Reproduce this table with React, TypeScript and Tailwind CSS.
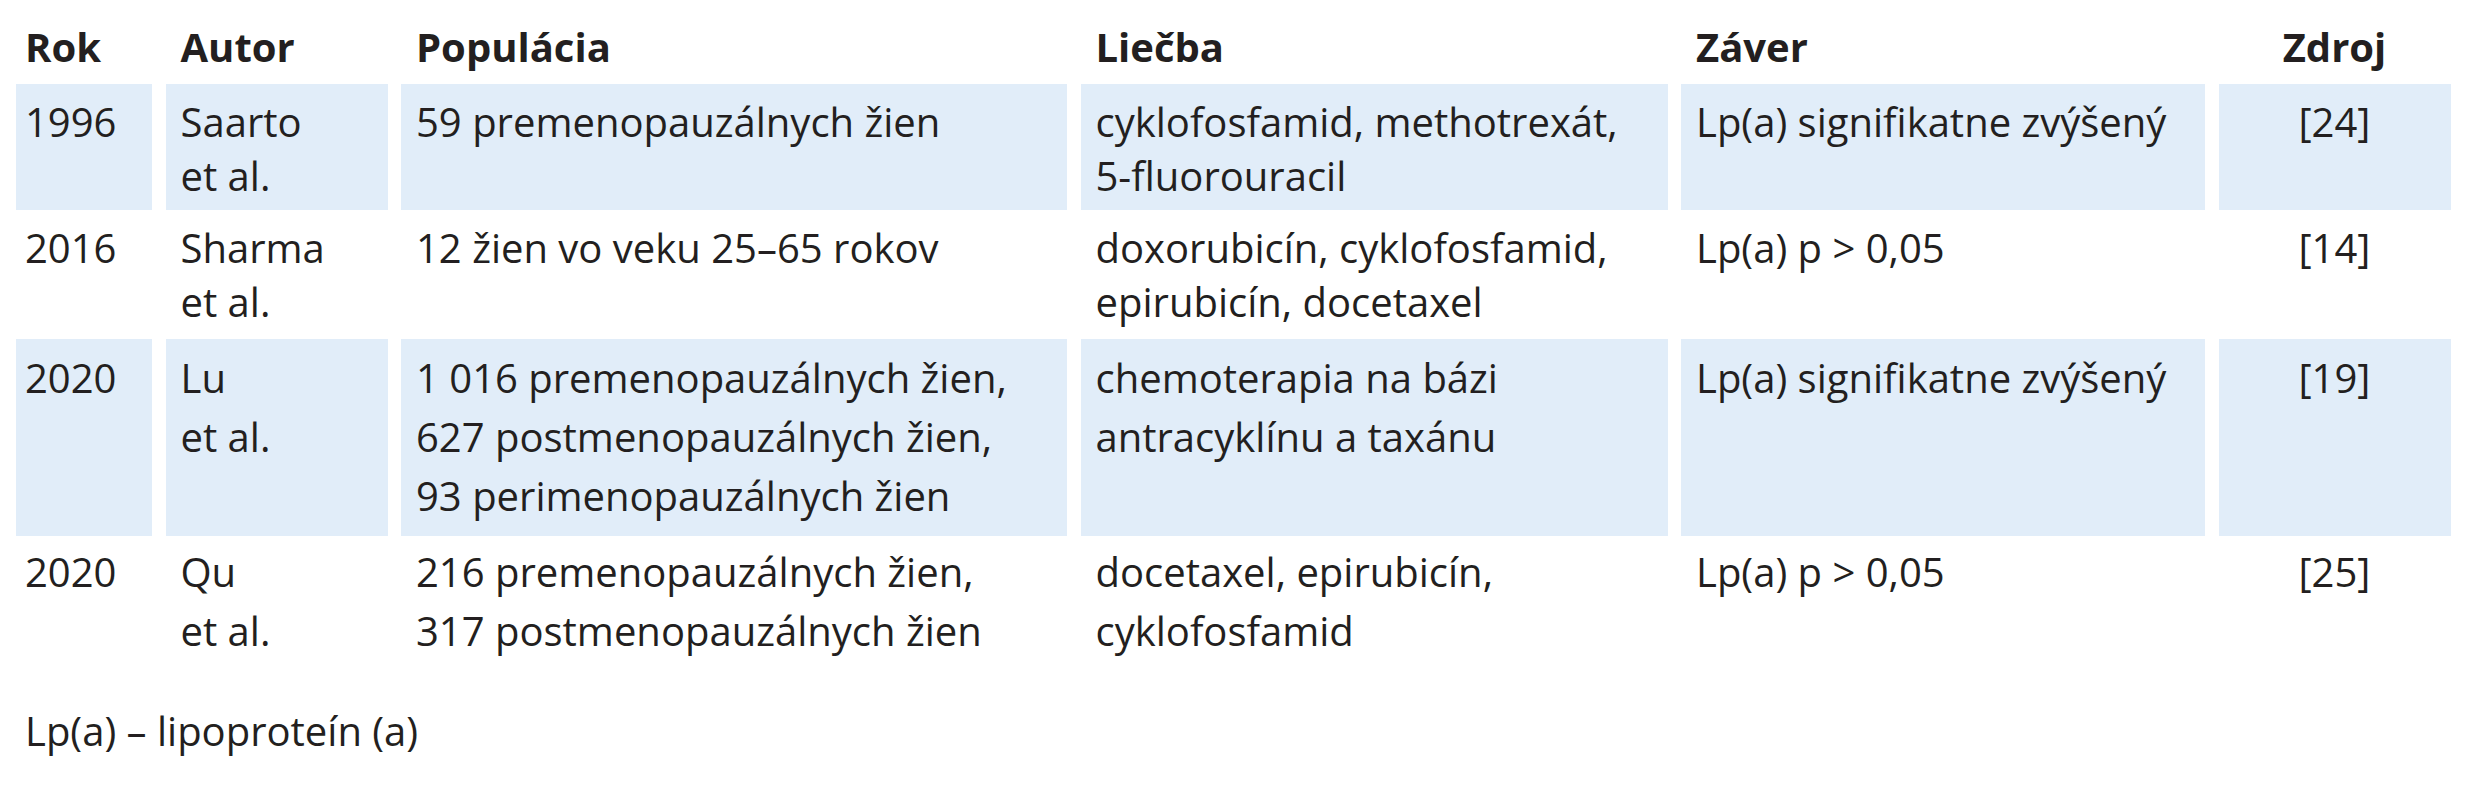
const rows = [
  {
    rok: "1996",
    autor: ["Saarto", "et al."],
    populacia: ["59 premenopauzálnych žien"],
    liecba: ["cyklofosfamid, methotrexát,", "5-fluorouracil"],
    zaver: "Lp(a) signifikatne zvýšený",
    zdroj: "[24]",
    shaded: true,
    box: "h-[126px] leading-[54px]",
    pad: "pt-[11px]",
  },
  {
    rok: "2016",
    autor: ["Sharma", "et al."],
    populacia: ["12 žien vo veku 25–65 rokov"],
    liecba: ["doxorubicín, cyklofosfamid,", "epirubicín, docetaxel"],
    zaver: "Lp(a) p > 0,05",
    zdroj: "[14]",
    shaded: false,
    box: "h-[129px] leading-[54px]",
    pad: "pt-[11px]",
  },
  {
    rok: "2020",
    autor: ["Lu", "et al."],
    populacia: [
      "1\u00a0016 premenopauzálnych žien,",
      "627 postmenopauzálnych žien,",
      "93 perimenopauzálnych žien",
    ],
    liecba: ["chemoterapia na bázi", "antracyklínu a taxánu"],
    zaver: "Lp(a) signifikatne zvýšený",
    zdroj: "[19]",
    shaded: true,
    box: "h-[197px] leading-[59px]",
    pad: "pt-[9px]",
  },
  {
    rok: "2020",
    autor: ["Qu", "et al."],
    populacia: ["216 premenopauzálnych žien,", "317 postmenopauzálnych žien"],
    liecba: ["docetaxel, epirubicín,", "cyklofosfamid"],
    zaver: "Lp(a) p > 0,05",
    zdroj: "[25]",
    shaded: false,
    box: "h-[130px] leading-[59px]",
    pad: "pt-[6px]",
  },
];

function Lines({ lines }: { lines: string[] }) {
  return (
    <>
      {lines.map((line, i) => (
        <div key={i} className="whitespace-nowrap">
          {line}
        </div>
      ))}
    </>
  );
}

export default function App() {
  return (
    <div className="min-h-[800px] w-[2466px] bg-white pl-4 font-['Open_Sans',sans-serif] text-[40px] leading-[59px] text-[#231f20]">
      {/* Header */}
      <div className="grid h-[84px] grid-cols-[136px_222px_666px_587px_524px_232px] gap-x-[13.5px] font-bold">
        <div className="pl-[9px] pt-[17px]">Rok</div>
        <div className="pl-[15px] pt-[17px]">Autor</div>
        <div className="pl-[15px] pt-[17px]">Populácia</div>
        <div className="pl-[15px] pt-[17px]">Liečba</div>
        <div className="pl-[15px] pt-[17px]">Záver</div>
        <div className="pt-[17px] text-center">Zdroj</div>
      </div>

      {/* Body rows */}
      {rows.map((row, i) => {
        const cell = row.shaded ? `bg-[#e1edf9] ${row.pad}` : row.pad;
        return (
          <div
            key={i}
            className={`grid ${row.box} grid-cols-[136px_222px_666px_587px_524px_232px] gap-x-[13.5px]`}
          >
            <div className={`${cell} pl-[9px]`}>{row.rok}</div>
            <div className={`${cell} pl-[15px]`}>
              <Lines lines={row.autor} />
            </div>
            <div className={`${cell} pl-[15px]`}>
              <Lines lines={row.populacia} />
            </div>
            <div className={`${cell} pl-[15px]`}>
              <Lines lines={row.liecba} />
            </div>
            <div className={`${cell} pl-[15px] whitespace-nowrap`}>{row.zaver}</div>
            <div className={`${cell} text-center`}>{row.zdroj}</div>
          </div>
        );
      })}

      {/* Footnote */}
      <p className="mt-[35px] pl-[9px]">Lp(a) – lipoproteín (a)</p>
    </div>
  );
}
